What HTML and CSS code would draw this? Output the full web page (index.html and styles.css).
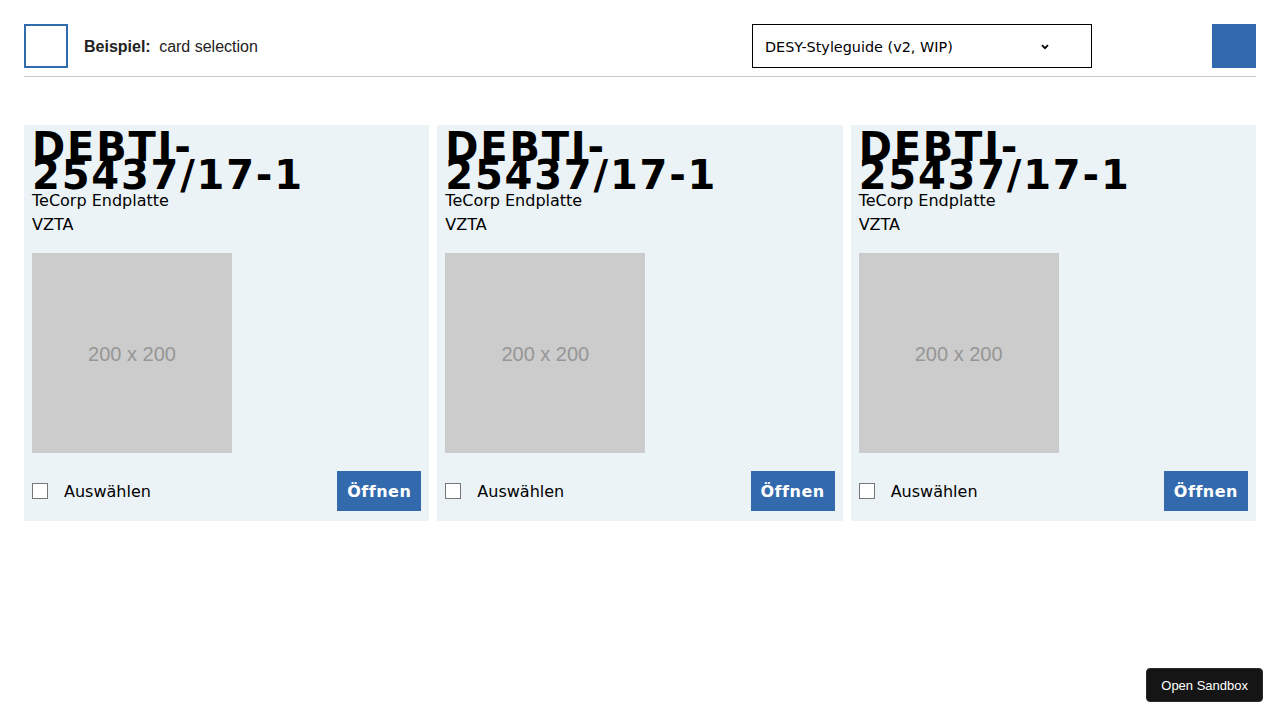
FILE: index.html
```html
<!DOCTYPE html>
<html lang="de">
<head>
<meta charset="utf-8">
<title>card selection</title>
<link rel="stylesheet" href="styles.css">
</head>
<body>
<header class="topbar">
  <div class="logo-box"></div>
  <div class="title"><strong>Beispiel:</strong> card selection</div>
  <div class="select-wrap">
    <select class="theme-select">
      <option>DESY-Styleguide (v2, WIP)</option>
    </select>
    <svg class="chevron" width="8" height="6" viewBox="0 0 8 6"><path d="M1 1.2 L4 4.2 L7 1.2" fill="none" stroke="#000" stroke-width="1.8"/></svg>
  </div>
  <div class="blue-box"></div>
</header>

<main class="cards">
  <article class="card">
    <h2 class="card-title">DEBTI-25437/17-1</h2>
    <p class="card-line">TeCorp Endplatte</p>
    <p class="card-line">VZTA</p>
    <div class="placeholder">200 x 200</div>
    <div class="card-foot">
      <label class="check"><span class="box"></span>Auswählen</label>
      <button class="open-btn">Öffnen</button>
    </div>
  </article>
  <article class="card">
    <h2 class="card-title">DEBTI-25437/17-1</h2>
    <p class="card-line">TeCorp Endplatte</p>
    <p class="card-line">VZTA</p>
    <div class="placeholder">200 x 200</div>
    <div class="card-foot">
      <label class="check"><span class="box"></span>Auswählen</label>
      <button class="open-btn">Öffnen</button>
    </div>
  </article>
  <article class="card">
    <h2 class="card-title">DEBTI-25437/17-1</h2>
    <p class="card-line">TeCorp Endplatte</p>
    <p class="card-line">VZTA</p>
    <div class="placeholder">200 x 200</div>
    <div class="card-foot">
      <label class="check"><span class="box"></span>Auswählen</label>
      <button class="open-btn">Öffnen</button>
    </div>
  </article>
</main>

<button class="sandbox-btn">Open Sandbox</button>
</body>
</html>
```

FILE: styles.css
```css
* { box-sizing: border-box; }
html, body { margin: 0; padding: 0; background: #fff; }
body {
  padding: 24px;
  font-family: "DejaVu Sans", Verdana, sans-serif;
  color: #000;
}

.topbar {
  display: flex;
  align-items: center;
  height: 53px;
  padding-bottom: 8px;
  border-bottom: 1px solid #cccccc;
  margin-bottom: 48px;
}
.logo-box {
  width: 44px;
  height: 44px;
  border: 2px solid #336aad;
  flex: none;
}
.title {
  margin-left: 16px;
  padding-top: 2px;
  font-family: "Liberation Sans", Arial, sans-serif;
  font-size: 16px;
  color: #222;
  flex: 1;
}
.title strong { margin-right: 4px; }
.select-wrap {
  position: relative;
  width: 340px;
  height: 44px;
  margin-right: 120px;
  flex: none;
}
.theme-select {
  appearance: none;
  -webkit-appearance: none;
  width: 100%;
  height: 100%;
  border: 1px solid #000;
  border-radius: 0;
  background: #fff;
  padding: 2px 12px 0;
  font-family: "DejaVu Sans", Verdana, sans-serif;
  font-size: 14.4px;
  color: #000;
}
.chevron {
  position: absolute;
  right: 43px;
  top: 20px;
  pointer-events: none;
}
.blue-box {
  width: 44px;
  height: 44px;
  background: #336aad;
  flex: none;
}

.cards {
  display: grid;
  grid-template-columns: repeat(3, 1fr);
  gap: 8px;
}
.card {
  background: #ebf3f7;
  padding: 8px 8px 10px;
}
.card-title {
  margin: 0;
  max-width: 320px;
  font-size: 40px;
  line-height: 28px;
  font-weight: bold;
  letter-spacing: 1.8px;
}
.card-line {
  margin: 0;
  font-size: 16px;
  line-height: 24px;
}
.placeholder {
  margin-top: 16px;
  width: 200px;
  height: 200px;
  background: #cccccc;
  color: #969696;
  font-family: "Liberation Sans", Arial, sans-serif;
  font-size: 20px;
  padding-top: 3px;
  display: flex;
  align-items: center;
  justify-content: center;
}
.card-foot {
  margin-top: 18px;
  display: flex;
  align-items: center;
  justify-content: space-between;
  height: 40px;
}
.check {
  display: flex;
  align-items: center;
  font-size: 16px;
  gap: 16px;
}
.box {
  width: 16px;
  height: 16px;
  background: #fff;
  border: 1px solid #767676;
}
.open-btn {
  height: 40px;
  padding: 0 10px;
  border: 0;
  background: #336aad;
  color: #fff;
  font-family: "DejaVu Sans", Verdana, sans-serif;
  font-weight: bold;
  font-size: 16px;
  letter-spacing: 0.5px;
}

.sandbox-btn {
  position: fixed;
  right: 17px;
  bottom: 18px;
  height: 34px;
  padding: 0 14px;
  background: #151515;
  color: #fff;
  border: 1px solid #2a2a2a;
  border-radius: 4px;
  font-family: "Liberation Sans", Arial, sans-serif;
  font-size: 13px;
}
```
